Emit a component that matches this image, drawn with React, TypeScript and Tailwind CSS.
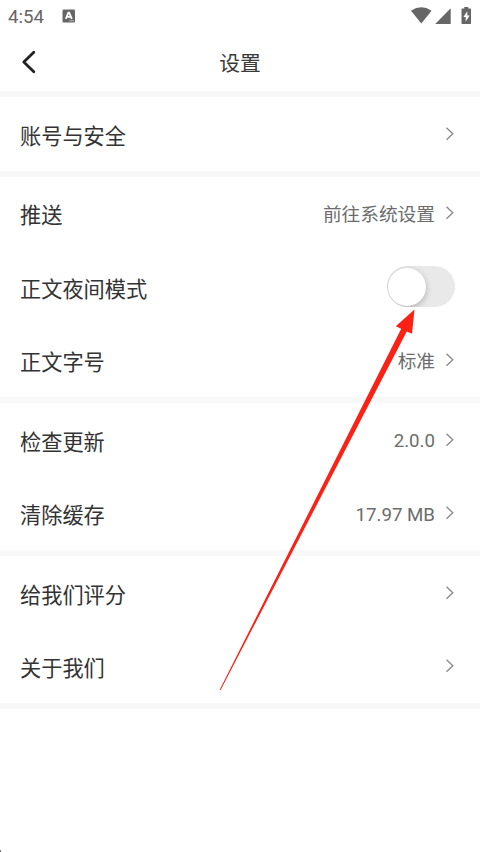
import { memo } from 'react';

interface SettingItem {
  label: string;
  value?: string;
  toggle?: boolean;
}

const groups: SettingItem[][] = [
  [{ label: '账号与安全' }],
  [
    { label: '推送', value: '前往系统设置' },
    { label: '正文夜间模式', toggle: true },
    { label: '正文字号', value: '标准' },
  ],
  [
    { label: '检查更新', value: '2.0.0' },
    { label: '清除缓存', value: '17.97 MB' },
  ],
  [{ label: '给我们评分' }, { label: '关于我们' }],
];

const StatusBar = () => (
  <div className="flex h-8 items-center justify-between pl-2 pr-[9px] text-[#666]">
    <div className="flex items-center gap-[18px]">
      <span className="w-9 pt-px text-[18.7px] leading-8">4:54</span>
      <svg width="14" height="14" viewBox="0 0 14 14" className="-mt-px" aria-hidden="true">
        <rect x="0.5" y="0.5" width="12.5" height="13" rx="1.2" fill="#666" />
        <path d="M3.8 9.8 6.4 3.6h.8L9.8 9.8M4.7 7.8h4.2" fill="none" stroke="#fff" strokeWidth="1.8" />
        <path d="M7 11.8h5" stroke="#bbb" strokeWidth="1" />
      </svg>
    </div>
    <svg width="60" height="18" viewBox="0 0 60 18" aria-hidden="true">
      <path d="M0 3.7Q10.3-3.1 20.6 3.7L10.3 16.5Z" fill="#666" />
      <path d="M39.7 1.3V17H24.2Z" fill="#666" />
      <path d="M51.3 1.6h2V0h4v1.6h2q.7 0 .7.7v14q0 .8-.7.8h-8q-.8 0-.8-.8v-14q0-.7.8-.7Z" fill="#666" />
      <path d="M56.3 4.3 52.4 10h2.3v4.4l4-6h-2.4Z" fill="#fff" />
    </svg>
  </div>
);

const Chevron = () => (
  <svg width="9" height="14" viewBox="0 0 9 14" className="ml-[11px] shrink-0" aria-hidden="true">
    <path d="M.5.8 6.8 6.8.5 12.8" fill="none" stroke="#888" strokeWidth="1.3" />
  </svg>
);

const Toggle = () => (
  <button
    role="switch"
    aria-checked={false}
    aria-label="正文夜间模式"
    className="flex h-[41px] w-[68px] items-center overflow-hidden rounded-full bg-[#e9e9e9] pl-px"
  >
    <span className="size-[38px] rounded-full bg-white shadow-[0_2px_6px_rgba(0,0,0,0.25)]" />
  </button>
);

const SettingRow = memo(({ label, value, toggle }: SettingItem) => (
  <div className="flex h-[73.45px] items-center justify-between pl-5 pr-[25px]">
    <span className="pt-1.5 text-[21.2px] leading-8 text-[#333]">{label}</span>
    {toggle ? (
      <Toggle />
    ) : (
      <div className="flex items-center">
        {value && <span className="pt-[3px] text-[18.7px] leading-7 text-[#6c6c6c]">{value}</span>}
        <Chevron />
      </div>
    )}
  </div>
));

SettingRow.displayName = 'SettingRow';

const App = () => {
  return (
    <div className="relative h-[852px] w-[480px] overflow-hidden bg-white font-[Roboto,'Noto_Sans_CJK_SC',sans-serif]">
      <StatusBar />
      <header className="grid h-[59.3px] grid-cols-[1fr_auto_1fr] items-center">
        <svg width="16" height="24" viewBox="0 0 16 24" className="ml-[21px]" aria-label="返回">
          <path
            d="M12.8 2.2 2.8 12l10 9.7"
            fill="none"
            stroke="#222"
            strokeWidth="2.8"
            strokeLinecap="round"
            strokeLinejoin="round"
          />
        </svg>
        <h1 className="pt-[5px] text-[20.8px] leading-8 text-[#3a3a3a]">设置</h1>
      </header>

      {groups.map((items, index) => (
        <section key={index} className="border-t-[6px] border-[#f8f8f8] last-of-type:border-b-[6px]">
          {items.map((item) => (
            <SettingRow key={item.label} {...item} />
          ))}
        </section>
      ))}

      {/* Pointer to the night mode switch */}
      <svg
        width="480"
        height="852"
        viewBox="0 0 480 852"
        className="pointer-events-none absolute left-0 top-0"
        aria-hidden="true"
      >
        <path d="M414.5 309.5 395.8 326.3 401.2 328.8 219.7 689.7 220.5 690.2 406.8 331.5 412 333.8Z" fill="#fb2114" />
      </svg>
      <span className="absolute bottom-0 left-0 h-0.5 w-px bg-[#777]" />
    </div>
  );
};

export default App;
